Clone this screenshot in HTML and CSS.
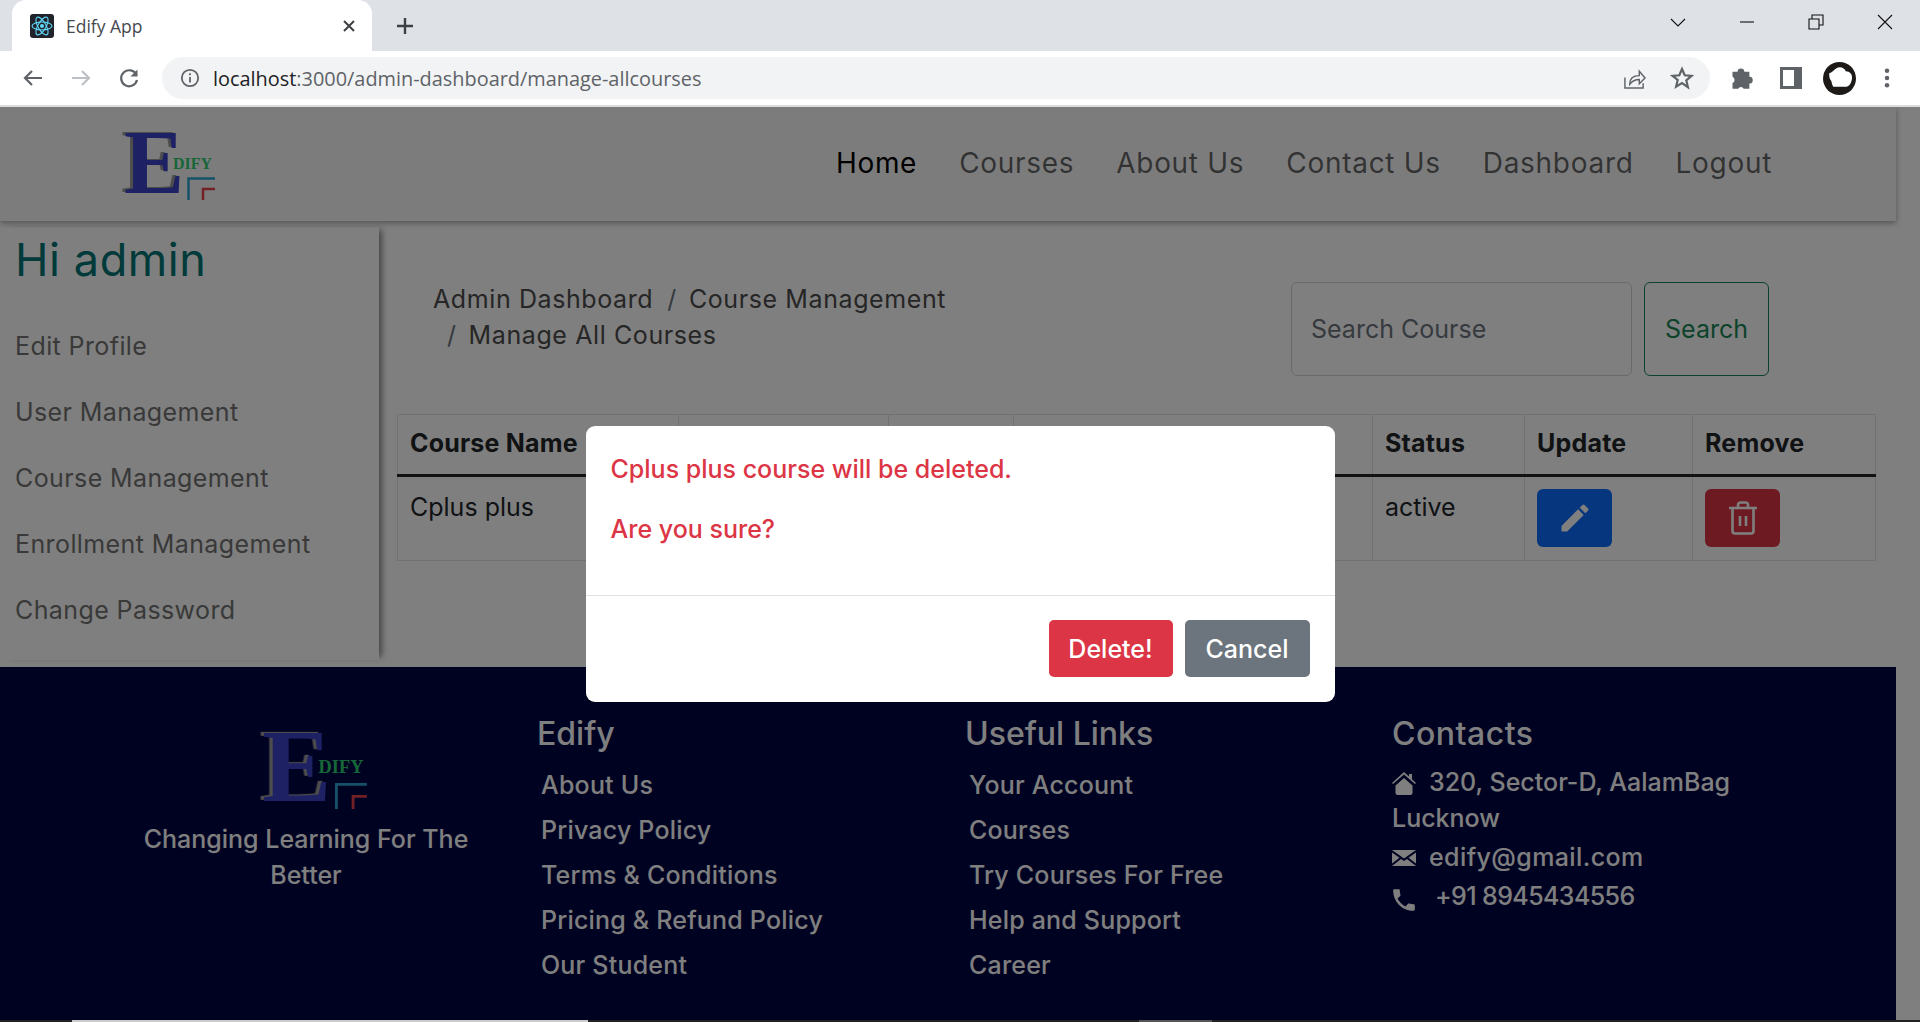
FILE: index.html
```html
<!DOCTYPE html>
<html lang="en">
<head>
    <meta charset="UTF-8">
    <meta name="viewport" content="width=device-width, initial-scale=1.0">
    <title>Edify App</title>
    <link rel="stylesheet" href="styles.css">
</head>
<body>
    <div class="tabstrip">
        <div class="tab">
            <svg class="favicon" viewBox="0 0 24 24">
                <rect width="24" height="24" rx="3" fill="#20232a"/>
                <g fill="none" stroke="#61dafb" stroke-width="1.1">
                    <ellipse cx="12" cy="12" rx="10" ry="4"/>
                    <ellipse cx="12" cy="12" rx="10" ry="4" transform="rotate(60 12 12)"/>
                    <ellipse cx="12" cy="12" rx="10" ry="4" transform="rotate(120 12 12)"/>
                </g>
                <circle cx="12" cy="12" r="2" fill="#61dafb"/>
            </svg>
            <span class="tab-title">Edify App</span>
            <svg class="tab-close" viewBox="0 0 12 12"><path d="M1 1l10 10M11 1L1 11"/></svg>
        </div>
        <svg class="new-tab" viewBox="0 0 18 18"><path d="M9 1v16M1 9h16"/></svg>
        <div class="window-controls">
            <svg viewBox="0 0 16 10"><path d="M1 2l7 7 7-7"/></svg>
            <svg viewBox="0 0 16 10"><path d="M1 5h14"/></svg>
            <svg viewBox="0 0 16 16"><path d="M1 5h10v10H1zM4 5V1h11v10h-4"/></svg>
            <svg viewBox="0 0 16 16"><path d="M1 1l14 14M15 1L1 15"/></svg>
        </div>
    </div>

    <div class="toolbar">
        <svg class="tool" viewBox="0 0 24 24"><path d="M21 12H4M11 5l-7 7 7 7"/></svg>
        <svg class="tool tool-off" viewBox="0 0 24 24"><path d="M3 12h17M13 5l7 7-7 7"/></svg>
        <svg class="tool" viewBox="0 0 24 24"><path d="M19.5 9A8 8 0 1 0 20 14"/><path class="solid" d="M20.5 3.5v7h-7z"/></svg>
        <div class="omnibox">
            <svg class="info" viewBox="0 0 20 20"><circle cx="10" cy="10" r="8.2"/><path d="M10 9v5.5M10 5.2v2"/></svg>
            <span class="url"><span class="url-host">localhost</span>:3000/admin-dashboard/manage-allcourses</span>
            <svg class="share" viewBox="0 0 24 24"><path d="M2 11v11h19v-5"/><path d="M7 18c0-6 4-9 10-9V4.500l6 7-6 6V13c-4 0-7 1-10 5z"/></svg>
            <svg class="star" viewBox="0 0 24 24"><path d="M12 3l2.700 6.300 6.800.6-5.200 4.500 1.600 6.700L12 17l-5.900 3.600 1.600-6.700L2.500 9.900l6.800-.6z"/></svg>
        </div>
        <svg class="ext" viewBox="0 0 24 24"><path d="M4 8h4.500a3 3 0 0 1 6 0H19v4.500a3 3 0 0 1 0 6V23h-5a3 3 0 0 0-5 0H4v-5a3 3 0 0 0 0-5.500z" transform="translate(0 -2)"/></svg>
        <svg class="panel" viewBox="0 0 22 22"><path fill-rule="evenodd" d="M0 0h22v22H0zM3 3v16h11V3z"/></svg>
        <svg class="avatar" viewBox="0 0 32 32">
            <circle cx="16" cy="16" r="16" fill="#1d1a18"/>
            <path d="M6 11c3-1 4-3 7-5 4-2 8 0 9 3 4 0 7 3 6 8-1 4-2 6-5 7H10c-2-3-1-5-3-7-1-2-1-4-1-6z" fill="#fff"/>
        </svg>
        <svg class="dots" viewBox="0 0 6 22"><circle cx="3" cy="3" r="2.500"/><circle cx="3" cy="11" r="2.500"/><circle cx="3" cy="19" r="2.500"/></svg>
    </div>

    <div class="page">
        <div class="site">
            <header class="site-header">
                <svg class="logo" viewBox="0 0 94 68">
                    <text x="2" y="61" class="logo-e">E</text>
                    <text x="51" y="37" class="logo-dify" textLength="39" lengthAdjust="spacingAndGlyphs">DIFY</text>
                    <path d="M66.5 68V46.5H93" class="logo-teal"/>
                    <path d="M81 68V57H93" class="logo-red"/>
                </svg>
                <nav class="main-nav">
                    <a href="#" class="active">Home</a>
                    <a href="#">Courses</a>
                    <a href="#">About Us</a>
                    <a href="#">Contact Us</a>
                    <a href="#">Dashboard</a>
                    <a href="#">Logout</a>
                </nav>
            </header>

            <main class="dashboard">
                <aside class="sidebar">
                    <h2>Hi admin</h2>
                    <a href="#">Edit Profile</a>
                    <a href="#">User Management</a>
                    <a href="#">Course Management</a>
                    <a href="#">Enrollment Management</a>
                    <a href="#">Change Password</a>
                </aside>

                <section class="content">
                    <div class="top-row">
                        <ol class="breadcrumb">
                            <li>Admin Dashboard</li>
                            <li>Course Management</li>
                            <li>Manage All Courses</li>
                        </ol>
                        <form class="search">
                            <input type="text" placeholder="Search Course">
                            <button type="button">Search</button>
                        </form>
                    </div>

                    <table class="courses">
                        <thead>
                            <tr>
                                <th class="col-name">Course Name</th>
                                <th class="col-b"></th>
                                <th class="col-c"></th>
                                <th class="col-d"></th>
                                <th class="col-status">Status</th>
                                <th class="col-update">Update</th>
                                <th class="col-remove">Remove</th>
                            </tr>
                        </thead>
                        <tbody>
                            <tr>
                                <td>Cplus plus</td>
                                <td></td>
                                <td></td>
                                <td></td>
                                <td>active</td>
                                <td>
                                    <button class="icon-btn btn-blue">
                                        <svg viewBox="0 0 24 24"><path d="M3 17.250V21h3.750L17.810 9.940l-3.750-3.750L3 17.250zM20.710 7.040c.39-.39.39-1.020 0-1.410l-2.340-2.340a.996.996 0 0 0-1.410 0l-1.830 1.830 3.750 3.750 1.830-1.830z"/></svg>
                                    </button>
                                </td>
                                <td>
                                    <button class="icon-btn btn-red">
                                        <svg class="trash" viewBox="0 0 30 34"><path d="M1 7h28M10 7V4a2.500 2.500 0 0 1 2.500-2.500h5A2.500 2.500 0 0 1 20 4v3M4.500 7v23a2.500 2.500 0 0 0 2.500 2.500h16a2.500 2.500 0 0 0 2.500-2.500V7M12 15v10M18 15v10"/></svg>
                                    </button>
                                </td>
                            </tr>
                        </tbody>
                    </table>
                </section>
            </main>

            <footer class="site-footer">
                <div class="brand">
                    <svg class="logo-big" viewBox="0 0 94 68">
                        <text x="2" y="61" class="logo-e">E</text>
                        <text x="51" y="37" class="logo-dify" textLength="39" lengthAdjust="spacingAndGlyphs">DIFY</text>
                        <path d="M66.5 68V46.5H93" class="logo-teal"/>
                        <path d="M81 68V57H93" class="logo-red"/>
                    </svg>
                    <p>Changing Learning For The Better</p>
                </div>
                <div class="foot-col">
                    <h3>Edify</h3>
                    <a href="#">About Us</a>
                    <a href="#">Privacy Policy</a>
                    <a href="#">Terms &amp; Conditions</a>
                    <a href="#">Pricing &amp; Refund Policy</a>
                    <a href="#">Our Student</a>
                </div>
                <div class="foot-col">
                    <h3>Useful Links</h3>
                    <a href="#">Your Account</a>
                    <a href="#">Courses</a>
                    <a href="#">Try Courses For Free</a>
                    <a href="#">Help and Support</a>
                    <a href="#">Career</a>
                </div>
                <div class="contacts">
                    <h3>Contacts</h3>
                    <p>
                        <svg viewBox="0 0 24 24"><path d="M12 1L0 12l1 1L12 3.500 23 13l1-1-4-3.700V3h-3v2.600zM3.500 14.500L12 7l8.500 7.500V22a2 2 0 0 1-2 2h-13a2 2 0 0 1-2-2z"/></svg>320, Sector-D, AalamBag Lucknow
                    </p>
                    <p class="contact-mail">
                        <svg viewBox="0 0 24 24"><path d="M0 4l12 8.500L24 4zM0 6.500v11l7.500-5.700zM24 6.500v11l-7.500-5.700zM9 13l3 2 3-2 9 7H0z"/></svg>edify@gmail.com
                    </p>
                    <p class="contact-phone">
                        <svg viewBox="2 2 20 20"><path d="M6.620 10.790c1.440 2.830 3.760 5.140 6.590 6.590l2.200-2.200c.27-.27.67-.36 1.020-.24 1.120.37 2.330.57 3.570.57.55 0 1 .45 1 1V20c0 .55-.45 1-1 1-9.390 0-17-7.610-17-17 0-.55.45-1 1-1h3.500c.55 0 1 .45 1 1 0 1.250.2 2.450.57 3.570.11.35.03.74-.25 1.020l-2.200 2.200z"/></svg>+91 8945434556
                    </p>
                </div>
            </footer>
        </div>

        <div class="backdrop">
            <div class="modal">
                <div class="modal-body">
                    <p>Cplus plus course will be deleted.</p>
                    <p>Are you sure?</p>
                </div>
                <div class="modal-footer">
                    <button class="btn-delete">Delete!</button>
                    <button class="btn-cancel">Cancel</button>
                </div>
            </div>
        </div>
    </div>

    <div class="bottom-strip">
        <span class="strip-light"></span>
        <span class="strip-mid"></span>
    </div>
</body>
</html>
```

FILE: styles.css
```css
* {
    box-sizing: border-box;
}

html, body {
    margin: 0;
    height: 1022px;
    overflow: hidden;
}

body {
    display: flex;
    flex-direction: column;
    font-family: Inter, "Open Sans", sans-serif;
    background: #fff;
    color: #212529;
}

a {
    text-decoration: none;
    color: inherit;
}

/* browser chrome */
.tabstrip {
    height: 51px;
    flex: none;
    background: #dee1e6;
    display: flex;
    align-items: center;
    font-family: "Open Sans", sans-serif;
}

.tab {
    width: 360px;
    height: 51px;
    margin-left: 12px;
    padding: 0 17px 0 18px;
    background: #fff;
    border-radius: 14px 14px 0 0;
    display: flex;
    align-items: center;
}

.favicon {
    width: 24px;
    height: 24px;
}

.tab-title {
    margin-left: 12px;
    font-size: 17.500px;
    color: #45494e;
    flex: 1;
}

.tab-close {
    width: 12px;
    height: 12px;
    fill: none;
    stroke: #3c4043;
    stroke-width: 2;
}

.new-tab {
    width: 18px;
    height: 18px;
    margin-left: 24px;
    fill: none;
    stroke: #3c4043;
    stroke-width: 2.400;
}

.window-controls {
    margin-left: auto;
    display: flex;
    align-items: center;
    gap: 53px;
    padding: 0 27px 8px 0;
}

.window-controls svg {
    width: 16px;
    height: 16px;
    fill: none;
    stroke: #111;
    stroke-width: 1.100;
}

.toolbar {
    height: 56px;
    flex: none;
    background: #fff;
    border-bottom: 2px solid #dcdcdc;
    display: flex;
    align-items: center;
    padding-left: 21px;
    font-family: "Open Sans", sans-serif;
}

.tool {
    width: 24px;
    height: 24px;
    margin-right: 24px;
    fill: none;
    stroke: #5f6368;
    stroke-width: 2.200;
}

.tool-off {
    stroke: #bdc1c6;
}

.tool .solid {
    fill: #5f6368;
    stroke: none;
}

.omnibox {
    width: 1548px;
    height: 42px;
    margin-left: -3px;
    padding: 0 16px 0 18px;
    border-radius: 21px;
    background: #f1f3f4;
    display: flex;
    align-items: center;
}

.info {
    width: 20px;
    height: 20px;
    fill: none;
    stroke: #5f6368;
    stroke-width: 1.800;
}

.url {
    margin-left: 13px;
    font-size: 19.900px;
    color: #5f6368;
    flex: 1;
}

.url-host {
    color: #202124;
}

.share {
    width: 23px;
    height: 23px;
    margin-right: 24px;
    fill: none;
    stroke: #5f6368;
    stroke-width: 1.500;
}

.star {
    width: 24px;
    height: 24px;
    fill: none;
    stroke: #5f6368;
    stroke-width: 2.200;
}

.ext {
    width: 27px;
    height: 27px;
    margin-left: 18px;
    fill: #5f6368;
}

.panel {
    width: 22px;
    height: 22px;
    margin-left: 25px;
    fill: #5f6368;
}

.avatar {
    width: 33px;
    height: 33px;
    margin-left: 21px;
}

.dots {
    width: 6px;
    height: 20px;
    margin-left: 28px;
    fill: #5f6368;
}

/* page */
.page {
    position: relative;
    flex: none;
    height: 913px;
    background: #fff;
    overflow: hidden;
}

.site {
    width: 1896px;
}

.site-header {
    height: 114px;
    padding: 25px 124px 0 122px;
    background: #f8f9fa;
    box-shadow: 0 2px 6px rgba(0, 0, 0, 0.35);
    display: flex;
    position: relative;
}

.logo {
    width: 94px;
    height: 68px;
    overflow: visible;
}

.main-nav {
    margin-left: auto;
    display: flex;
    gap: 42px;
    height: 62px;
    align-items: center;
    font-size: 28px;
    letter-spacing: 0.7px;
    color: rgba(0, 0, 0, 0.6);
}

.main-nav .active {
    color: #000;
}

.dashboard {
    height: 446px;
    display: flex;
}

.sidebar {
    width: 379px;
    height: 433px;
    margin-top: 6px;
    flex: none;
    padding: 8px 15px 0;
    box-shadow: 6px 0 6px -3px rgba(0, 0, 0, 0.45);
    display: flex;
    flex-direction: column;
    font-size: 25px;
    letter-spacing: 0.4px;
    color: #737373;
}

.sidebar h2 {
    margin: 0 0 37px;
    font-size: 45px;
    line-height: 50px;
    font-weight: 400;
    letter-spacing: 0.6px;
    color: #007474;
}

.sidebar a {
    height: 66px;
    line-height: 48px;
}

.content {
    flex: 1;
    padding: 60px 21px 0 18px;
}

.top-row {
    display: flex;
    align-items: flex-start;
    margin-bottom: 38px;
}

.breadcrumb {
    list-style: none;
    margin: 0;
    padding: 0 0 0 36px;
    width: 620px;
    display: flex;
    flex-wrap: wrap;
    font-size: 25px;
    letter-spacing: 0.6px;
    line-height: 36px;
    color: #4c4c4c;
}

.breadcrumb li + li {
    padding-left: 14px;
}

.breadcrumb li + li::before {
    content: "/";
    padding-right: 12px;
    color: #6c757d;
}

.search {
    margin: 1px 107px 0 auto;
    display: flex;
    gap: 12px;
}

.search input {
    width: 341px;
    height: 94px;
    padding: 0 19px;
    border: 1px solid #ced4da;
    border-radius: 6px;
    background: #fff;
    font: inherit;
    font-size: 25px;
}

.search input::placeholder {
    color: #6c757d;
}

.search button {
    width: 125px;
    height: 94px;
    border: 1px solid #198754;
    border-radius: 6px;
    background: transparent;
    color: #198754;
    font: inherit;
    font-size: 25px;
}

.courses {
    width: 1478px;
    table-layout: fixed;
    border-collapse: collapse;
    font-size: 25px;
}

.courses th, .courses td {
    border: 1px solid #dee2e6;
    text-align: left;
    vertical-align: top;
    padding: 12px 12px;
    line-height: 36px;
}

.courses th {
    height: 61px;
    padding-top: 10px;
    font-weight: 700;
    letter-spacing: 0.2px;
    border-bottom: 3px solid #212529;
}

.courses td {
    height: 85px;
}

.col-name { width: 281px; }
.col-b { width: 210px; }
.col-c { width: 125px; }
.col-d { width: 359px; }
.col-status { width: 152px; }
.col-update { width: 168px; }
.col-remove { width: 183px; }

.icon-btn {
    display: flex;
    align-items: center;
    justify-content: center;
    width: 75px;
    height: 58px;
    border: 0;
    border-radius: 6px;
    padding: 0;
}

.icon-btn svg {
    width: 36px;
    height: 36px;
    fill: #fff;
}

.icon-btn .trash {
    width: 30px;
    height: 34px;
    fill: none;
    stroke: #fff;
    stroke-width: 2.600;
}

.btn-blue {
    background: #0d6efd;
}

.btn-red {
    background: #dc3545;
}

/* footer */
.site-footer {
    height: 353px;
    padding: 47px 0 0 116px;
    background: #000444;
    color: #fff;
    display: grid;
    grid-template-columns: 421px 428px 427px 1fr;
    font-size: 25px;
}

.brand {
    width: 380px;
    text-align: center;
}

.logo-big {
    display: block;
    width: 108px;
    height: 82px;
    margin: 15px 0 0 144px;
    overflow: visible;
}

.brand p {
    margin: 10px 0 0;
    line-height: 36px;
    font-weight: 500;
}

.site-footer h3 {
    margin: 0;
    font-size: 32px;
    line-height: 40px;
    font-weight: 500;
}

.foot-col {
    display: flex;
    flex-direction: column;
}

.foot-col h3 {
    margin-bottom: 9px;
}

.foot-col a {
    margin-left: 4px;
    line-height: 45px;
    letter-spacing: 0.2px;
    font-weight: 500;
}

.contacts h3 {
    margin-bottom: 10px;
    letter-spacing: 0.5px;
}

.contacts p {
    margin: 0 0 3px;
    width: 370px;
    line-height: 36px;
    font-weight: 500;
}

.contacts svg {
    width: 24px;
    height: 24px;
    margin: 0 13px -4px 0;
    fill: #fff;
}

.contacts .contact-mail {
    letter-spacing: 0.4px;
}

.contacts .contact-phone {
    letter-spacing: -0.6px;
}

.contact-phone svg {
    margin-right: 19px;
    margin-bottom: -7px;
}

/* modal */
.backdrop {
    position: absolute;
    inset: 0;
    background: rgba(0, 0, 0, 0.5);
    display: flex;
    justify-content: center;
    align-items: flex-start;
}

.modal {
    width: 749px;
    height: 276px;
    margin-top: 319px;
    background: #fff;
    border-radius: 9px;
}

.modal-body {
    height: 169px;
    padding: 25px;
    color: #dc3545;
    font-size: 25px;
    line-height: 36px;
    font-weight: 500;
}

.modal-body p {
    margin: 0 0 24px;
}

.modal-footer {
    padding: 24px 25px;
    border-top: 1px solid #dee2e6;
    display: flex;
    justify-content: flex-end;
    gap: 12px;
}

.modal-footer button {
    width: 124px;
    height: 57px;
    border: 0;
    border-radius: 5px;
    color: #fff;
    font: inherit;
    font-size: 25px;
    font-weight: 500;
}

.btn-delete {
    background: #dc3545;
}

.modal-footer .btn-cancel {
    width: 125px;
    background: #6c757d;
}

.bottom-strip {
    height: 2px;
    flex: none;
    background: #222;
    position: relative;
}

.strip-light {
    display: block;
    width: 516px;
    height: 2px;
    margin-left: 72px;
    background: #ccc;
}

.strip-mid {
    display: block;
    width: 73px;
    height: 2px;
    margin: -2px 0 0 1139px;
    background: #555;
}

/* logo parts */
.logo-e {
    font-family: "Liberation Serif", serif;
    font-weight: 700;
    font-size: 90px;
    fill: #3c42c8;
    filter: drop-shadow(-3px -1px 0 #9a9a9a);
}

.logo-dify {
    font-family: "Liberation Serif", serif;
    font-weight: 700;
    font-size: 17px;
    fill: #2ecc71;
}

.logo-teal {
    fill: none;
    stroke: #2ba5d0;
    stroke-width: 2.500;
}

.logo-red {
    fill: none;
    stroke: #e8404f;
    stroke-width: 2.500;
}
```
